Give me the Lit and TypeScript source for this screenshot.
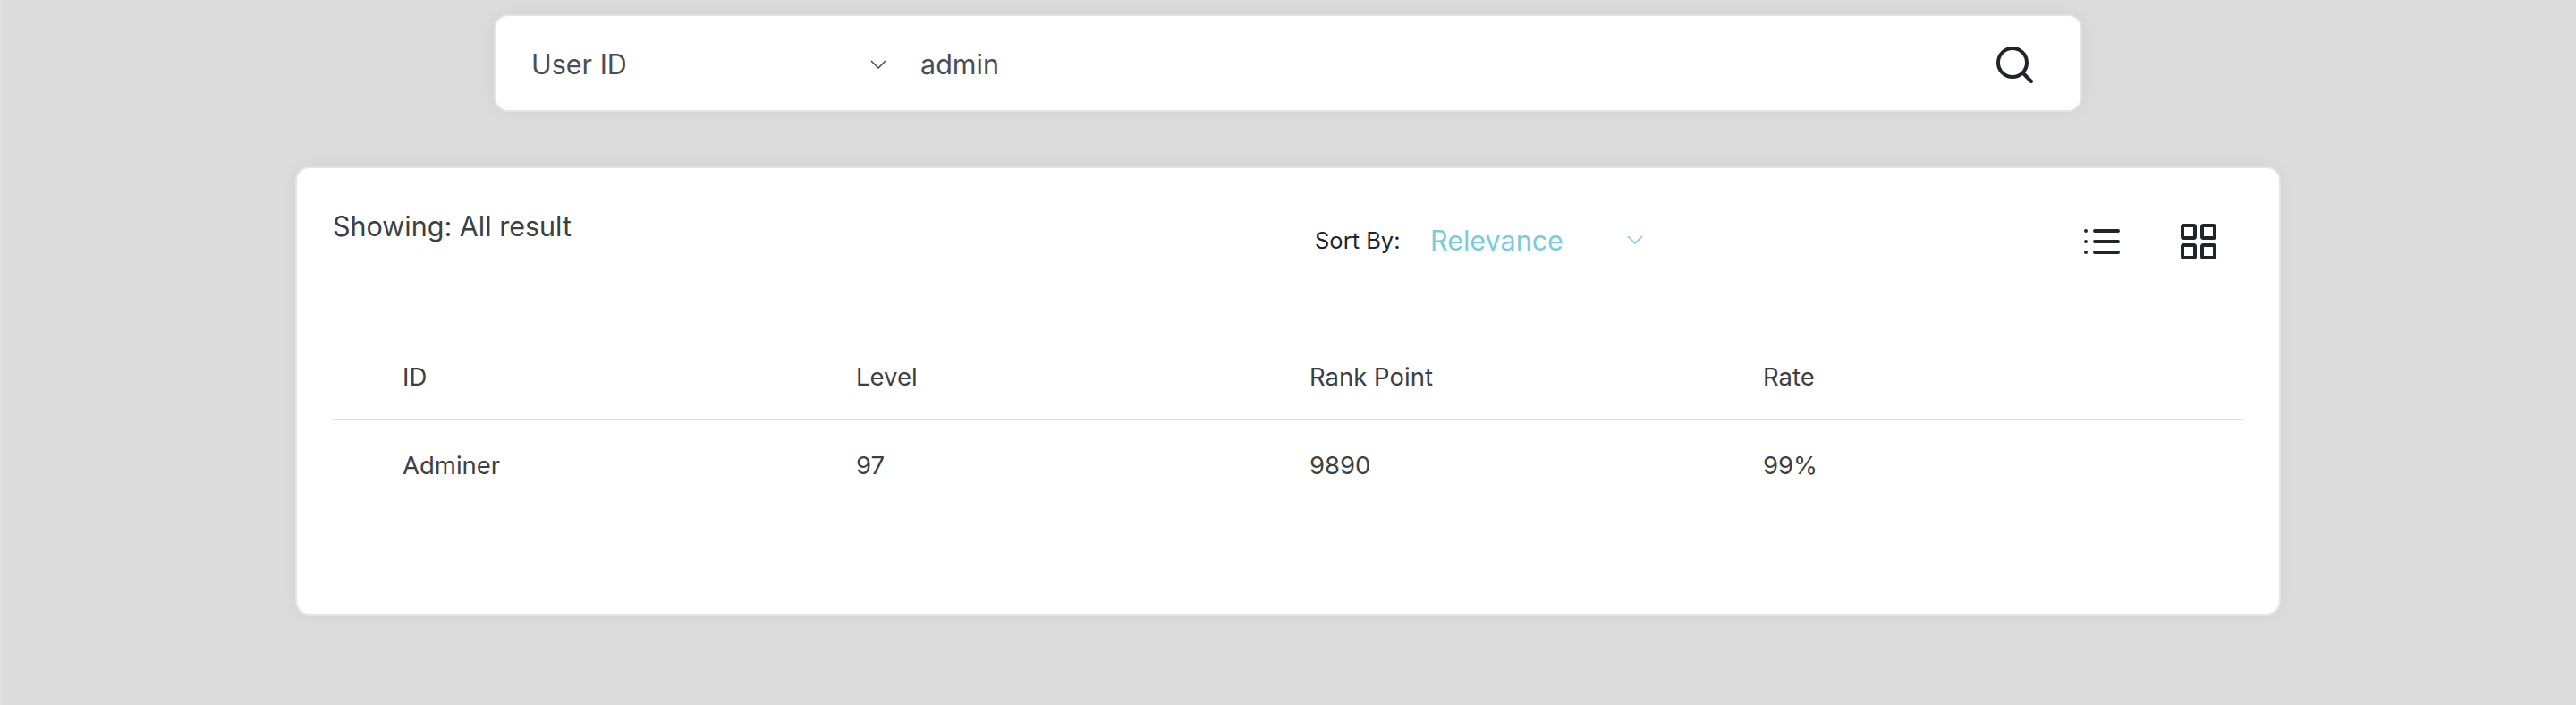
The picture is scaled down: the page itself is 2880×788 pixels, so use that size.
import { LitElement, html, css } from 'lit';
import { customElement } from 'lit/decorators.js';

const chevron = html`<svg viewBox="0 0 18 10" width="18" height="10" fill="none" stroke="currentColor" stroke-width="1.6">
  <path d="M1 1l8 8 8-8" />
</svg>`;

@customElement('app-root')
export class AppRoot extends LitElement {
  static styles = css`
    :host {
      display: block;
      min-height: 788px;
      box-sizing: border-box;
      background: #dcdcdc;
      box-shadow: inset 2px 0 0 #e1e1e1;
      padding-top: 16px;
      font-family: Inter, 'Liberation Sans', sans-serif;
      color: #3c4043;
    }
    .search,
    .card {
      box-sizing: border-box;
      background: #fff;
      border: 2px solid #e4e4e8;
      box-shadow: 0 0 20px rgba(0, 0, 0, 0.05);
    }
    .search {
      width: 1776px;
      height: 109px;
      margin-left: 552px;
      border-radius: 16px;
      display: flex;
      align-items: center;
      padding: 2px 53px 0 40px;
      font-size: 30.5px;
    }
    .select {
      width: 397px;
      display: flex;
      align-items: center;
      justify-content: space-between;
      color: #4a4f55;
    }
    .select svg {
      color: #4a4f55;
    }
    .query {
      flex: 1;
      margin-left: 38px;
      color: #4a4f55;
    }
    .search-icon {
      display: block;
      margin-top: 2px;
      color: #212529;
    }
    .card {
      width: 2220px;
      height: 502px;
      margin: 61px 0 0 330px;
      border-radius: 16px;
      padding: 45px 40px 0;
    }
    .toolbar {
      display: flex;
      align-items: flex-start;
      height: 170px;
    }
    .showing {
      width: 1098px;
      font-size: 30.5px;
      line-height: 40px;
      color: #3c4043;
    }
    .sort {
      display: flex;
      align-items: center;
      width: 860px;
      height: 40px;
      margin-top: 15px;
    }
    .sort-label {
      font-size: 25.5px;
      color: #212529;
      width: 97px;
    }
    .sort-select {
      width: 238px;
      margin-left: 32px;
      display: flex;
      align-items: center;
      justify-content: space-between;
      font-size: 30.5px;
      color: #7ccbdb;
    }
    .views {
      display: flex;
      gap: 68px;
      margin-top: 17px;
    }
    .views svg {
      display: block;
      color: #212529;
    }
    .table {
      width: 2136px;
      font-size: 27.5px;
      color: #3c4043;
    }
    .row {
      display: grid;
      grid-template-columns: repeat(4, 507px);
      padding-left: 78px;
    }
    .head {
      padding-bottom: 29px;
      line-height: 36px;
      border-bottom: 2px solid #dee2e6;
    }
    .body {
      padding-top: 32px;
      line-height: 36px;
    }
  `;

  render() {
    return html`
      <div class="search">
        <div class="select"><span>User ID</span>${chevron}</div>
        <div class="query">admin</div>
        <svg class="search-icon" viewBox="0 0 41 41" width="41" height="41" fill="none" stroke="currentColor" stroke-width="4" stroke-linecap="round">
          <circle cx="18" cy="18" r="16" />
          <path d="M30 30l9 9" />
        </svg>
      </div>
      <div class="card">
        <div class="toolbar">
          <div class="showing">Showing: All result</div>
          <div class="sort">
            <span class="sort-label">Sort By:</span>
            <div class="sort-select"><span>Relevance</span>${chevron}</div>
          </div>
          <div class="views">
            <svg viewBox="0 0 40 40" width="40" height="40" fill="currentColor">
              <circle cx="2" cy="8" r="2" />
              <circle cx="2" cy="20" r="2" />
              <circle cx="2" cy="32" r="2" />
              <rect x="10" y="6" width="30" height="4" rx="2" />
              <rect x="10" y="18" width="30" height="4" rx="2" />
              <rect x="10" y="30" width="30" height="4" rx="2" />
            </svg>
            <svg viewBox="0 0 40 40" width="40" height="40" fill="none" stroke="currentColor" stroke-width="4">
              <rect x="2" y="2" width="14" height="14" rx="1.5" />
              <rect x="24" y="2" width="14" height="14" rx="1.5" />
              <rect x="2" y="24" width="14" height="14" rx="1.5" />
              <rect x="24" y="24" width="14" height="14" rx="1.5" />
            </svg>
          </div>
        </div>
        <div class="table">
          <div class="row head"><span>ID</span><span>Level</span><span>Rank Point</span><span>Rate</span></div>
          <div class="row body"><span>Adminer</span><span>97</span><span>9890</span><span>99%</span></div>
        </div>
      </div>
    `;
  }
}
